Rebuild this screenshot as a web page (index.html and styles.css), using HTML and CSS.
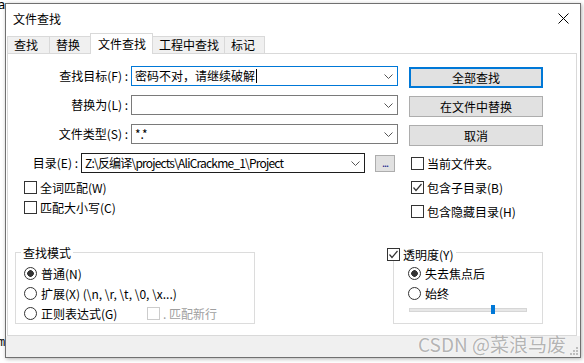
FILE: index.html
```html
<!DOCTYPE html>
<html>
<head>
  <meta charset="UTF-8">
  <title>文件查找</title>
  <link rel="stylesheet" href="styles.css">
</head>
<body>
  <div class="desk">
    <!-- restos del escritorio detrás de la ventana -->
    <span class="bg-a">a</span>
    <span class="bg-m">m</span>

    <div class="dialog">
      <div class="titlebar">
        <span class="title">文件查找</span>
        <svg class="close" width="11" height="11" viewBox="0 0 11 11">
          <path d="M0.5 0.5 L10.5 10.5 M10.5 0.5 L0.5 10.5" stroke="#000" stroke-width="1" fill="none"/>
        </svg>
      </div>

      <div class="tabs">
        <span class="tab">查找</span>
        <span class="tab">替换</span>
        <span class="tab active">文件查找</span>
        <span class="tab">工程中查找</span>
        <span class="tab">标记</span>
      </div>

      <div class="panel">
        <div class="top">
          <div class="fields">
            <div class="field-grid">
              <label>查找目标(F) :</label>
              <div class="combo focus">
                <span>密码不对，请继续破解</span><span class="caret"></span>
                <svg class="chev" width="9" height="5" viewBox="0 0 9 5"><polyline points="0.5,0.5 4.5,4.5 8.5,0.5" fill="none" stroke="#555"/></svg>
              </div>
              <label>替换为(L) :</label>
              <div class="combo">
                <svg class="chev" width="9" height="5" viewBox="0 0 9 5"><polyline points="0.5,0.5 4.5,4.5 8.5,0.5" fill="none" stroke="#555"/></svg>
              </div>
              <label>文件类型(S) :</label>
              <div class="combo">
                <span>*.*</span>
                <svg class="chev" width="9" height="5" viewBox="0 0 9 5"><polyline points="0.5,0.5 4.5,4.5 8.5,0.5" fill="none" stroke="#555"/></svg>
              </div>
            </div>

            <div class="dir-row">
              <label>目录(E) :</label>
              <div class="combo dark">
                <span class="path">Z:\反编译\projects\AliCrackme_1\Project</span>
                <svg class="chev" width="9" height="5" viewBox="0 0 9 5"><polyline points="0.5,0.5 4.5,4.5 8.5,0.5" fill="none" stroke="#555"/></svg>
              </div>
              <span class="browse">...</span>
            </div>

            <div class="checks left">
              <div class="check"><span class="box"></span>全词匹配(W)</div>
              <div class="check"><span class="box"></span>匹配大小写(C)</div>
            </div>
          </div>

          <div class="actions">
            <div class="btn default">全部查找</div>
            <div class="btn">在文件中替换</div>
            <div class="btn">取消</div>
            <div class="checks right">
              <div class="check"><span class="box"></span>当前文件夹。</div>
              <div class="check">
                <span class="box"><svg width="11" height="11" viewBox="0 0 11 11"><polyline points="1.5,5.5 4,8.5 9.5,2" fill="none" stroke="#333" stroke-width="1.2"/></svg></span>包含子目录(B)
              </div>
              <div class="check"><span class="box"></span>包含隐藏目录(H)</div>
            </div>
          </div>
        </div>

        <div class="bottom">
          <div class="group mode">
            <span class="group-title">查找模式</span>
            <div class="opt"><span class="radio on"></span>普通(N)</div>
            <div class="opt"><span class="radio"></span>扩展(X) (\n, \r, \t, \0, \x...)</div>
            <div class="opt">
              <span class="radio"></span><span class="fixed">正则表达式(G)</span>
              <span class="box off"></span><span class="off-text">. 匹配新行</span>
            </div>
          </div>

          <div class="group opacity">
            <span class="group-title check">
              <span class="box"><svg width="11" height="11" viewBox="0 0 11 11"><polyline points="1.5,5.5 4,8.5 9.5,2" fill="none" stroke="#333" stroke-width="1.2"/></svg></span>透明度(Y)
            </span>
            <div class="opt"><span class="radio on"></span>失去焦点后</div>
            <div class="opt"><span class="radio"></span>始终</div>
            <div class="slider">
              <div class="track"></div>
              <div class="thumb"></div>
            </div>
          </div>
        </div>
      </div>

      <div class="status">
        <svg width="9" height="9" viewBox="0 0 9 9" fill="#bdbdbd">
          <rect x="7" y="1" width="2" height="2"/><rect x="4" y="4" width="2" height="2"/><rect x="7" y="4" width="2" height="2"/>
          <rect x="1" y="7" width="2" height="2"/><rect x="4" y="7" width="2" height="2"/><rect x="7" y="7" width="2" height="2"/>
        </svg>
      </div>
    </div>

    <div class="watermark">CSDN @菜浪马废</div>
  </div>
</body>
</html>
```

FILE: styles.css
```css
* {
  box-sizing: border-box;
}
body {
  margin: 0;
  background: #ffffff;
  font-family: "Noto Sans CJK SC", "Microsoft YaHei", sans-serif;
  font-size: 12px;
  line-height: 16px;
  color: #000000;
}
.desk {
  position: relative;
  width: 584px;
  height: 363px;
  padding: 3px 0 0 5px;
  overflow: hidden;
}
/* fragmentos del fondo */
.bg-a,
.bg-m {
  position: absolute;
  left: -2px;
  font-family: "DejaVu Sans Mono", monospace;
  font-size: 12px;
}
.bg-a {
  top: -3px;
}
.bg-m {
  top: 334px;
}
.dialog {
  position: relative;
  z-index: 1;
  width: 576px;
  height: 355px;
  border: 1px solid #707070;
  box-shadow: 1px 1px 4px rgba(0, 0, 0, 0.3);
  background: #ffffff;
  display: flex;
  flex-direction: column;
}
.titlebar {
  height: 29px;
  flex: none;
  display: flex;
  align-items: center;
  justify-content: space-between;
  padding: 0 11px 0 7px;
}
.close {
  display: block;
}
/* pestañas */
.tabs {
  height: 20px;
  flex: none;
  display: flex;
  align-items: flex-end;
  margin-left: 1px;
  position: relative;
  z-index: 1;
}
.tab {
  height: 17px;
  min-width: 42px;
  padding: 0 5px 0 6px;
  line-height: 16px;
  border: 1px solid #d9d9d9;
  border-width: 1px 0 0 1px;
  background: #f0f0f0;
  white-space: nowrap;
}
.tab:nth-child(2) {
  min-width: 41px;
}
.tab:last-child {
  min-width: 41px;
  border-right-width: 1px;
}
.tab.active {
  height: 21px;
  line-height: 19px;
  padding: 0 6px 0 7px;
  margin-bottom: -1px;
  border-width: 1px;
  border-bottom: none;
  background: #ffffff;
  position: relative;
  z-index: 1;
}
.tab.active + .tab {
  border-left-width: 0;
}
.panel {
  height: 283px;
  flex: none;
  margin: 0 3px 0 1px;
  border: 1px solid #d9d9d9;
  display: flex;
  flex-direction: column;
}
.top {
  display: flex;
  gap: 11px;
}
.fields {
  width: 390px;
  padding-top: 12px;
}
.field-grid {
  display: grid;
  grid-template-columns: 120px 267px;
  column-gap: 3px;
  row-gap: 9px;
}
.field-grid label,
.dir-row label {
  text-align: right;
  line-height: 20px;
  white-space: nowrap;
}
.combo {
  height: 20px;
  border: 1px solid #7a7a7a;
  background: #ffffff;
  display: flex;
  align-items: center;
  padding-left: 3px;
  white-space: nowrap;
}
.combo.focus {
  border-color: #0078d7;
}
.combo.dark {
  border-color: #1e1e1e;
}
.path {
  letter-spacing: -0.8px;
}
.caret {
  width: 1px;
  height: 14px;
  background: #000000;
  margin-left: 1px;
}
.chev {
  margin-left: auto;
  margin-right: 4px;
  flex: none;
}
.dir-row {
  display: grid;
  grid-template-columns: 70px 284px 20px;
  column-gap: 3px;
  align-items: center;
  margin-top: 9px;
}
.browse {
  width: 20px;
  height: 17px;
  margin-left: 7px;
  border: 1px solid #adadad;
  background: #e1e1e1;
  color: #1a1a8c;
  font-size: 11px;
  line-height: 13px;
  text-align: center;
  letter-spacing: -1px;
}
/* casillas */
.checks {
  display: flex;
  flex-direction: column;
}
.checks.left {
  margin-top: 8px;
  padding-left: 16px;
  gap: 7px;
}
.checks.right {
  margin-top: 3px;
  padding-left: 2px;
  gap: 11px;
}
.check {
  display: flex;
  align-items: center;
  gap: 3px;
  height: 13px;
  white-space: nowrap;
}
.box {
  width: 13px;
  height: 13px;
  flex: none;
  border: 1px solid #333333;
  background: #ffffff;
}
.box svg {
  display: block;
}
.box.off {
  border-color: #cccccc;
}
.off-text {
  color: #a0a0a0;
}
/* botones */
.actions {
  width: 134px;
  padding-top: 13px;
  display: flex;
  flex-direction: column;
}
.btn {
  height: 21px;
  margin-bottom: 8px;
  border: 1px solid #adadad;
  background: #e1e1e1;
  text-align: center;
  line-height: 19px;
}
.btn.default {
  border: 2px solid #0078d7;
  line-height: 17px;
}
/* grupos inferiores */
.bottom {
  margin-top: auto;
  display: flex;
  justify-content: space-between;
  padding: 0 33px 11px 7px;
}
.group {
  position: relative;
  height: 72px;
  border: 1px solid #dcdcdc;
  padding-top: 14px;
  display: flex;
  flex-direction: column;
  gap: 7px;
}
.group-title {
  position: absolute;
  top: -8px;
  left: 5px;
  padding: 0 2px;
  background: #ffffff;
  white-space: nowrap;
}
.mode {
  width: 240px;
  padding-left: 8px;
}
.opacity {
  width: 150px;
  padding-left: 14px;
}
.opacity .group-title {
  top: -5px;
  left: -7px;
  padding: 0 3px 0 0;
}
.opt {
  display: flex;
  align-items: center;
  gap: 3px;
  height: 13px;
  white-space: nowrap;
}
.opt .fixed {
  width: 103px;
}
.radio {
  width: 13px;
  height: 13px;
  flex: none;
  border: 1px solid #333333;
  border-radius: 50%;
  background: #ffffff;
  margin-right: 1px;
}
.radio.on {
  background: radial-gradient(circle, #333333 0 3px, #ffffff 3.6px);
}
.slider {
  position: relative;
  width: 118px;
  height: 9px;
  margin: -2px 0 0 1px;
}
.track {
  margin-top: 3px;
  height: 4px;
  background: #e7e7e7;
  border: 1px solid #d6d6d6;
}
.thumb {
  position: absolute;
  left: 82px;
  top: 0;
  width: 4px;
  height: 9px;
  background: #0078d7;
}
.status {
  flex: 1;
  background: #f0f0f0;
  display: flex;
  justify-content: flex-end;
  align-items: flex-end;
  padding: 0 2px 2px 0;
}
.watermark {
  position: absolute;
  z-index: 2;
  left: 418px;
  top: 333px;
  font-size: 19px;
  line-height: 22px;
  color: rgba(120, 120, 120, 0.55);
  text-shadow: 0 0 2px #ffffff;
  white-space: nowrap;
}
```
